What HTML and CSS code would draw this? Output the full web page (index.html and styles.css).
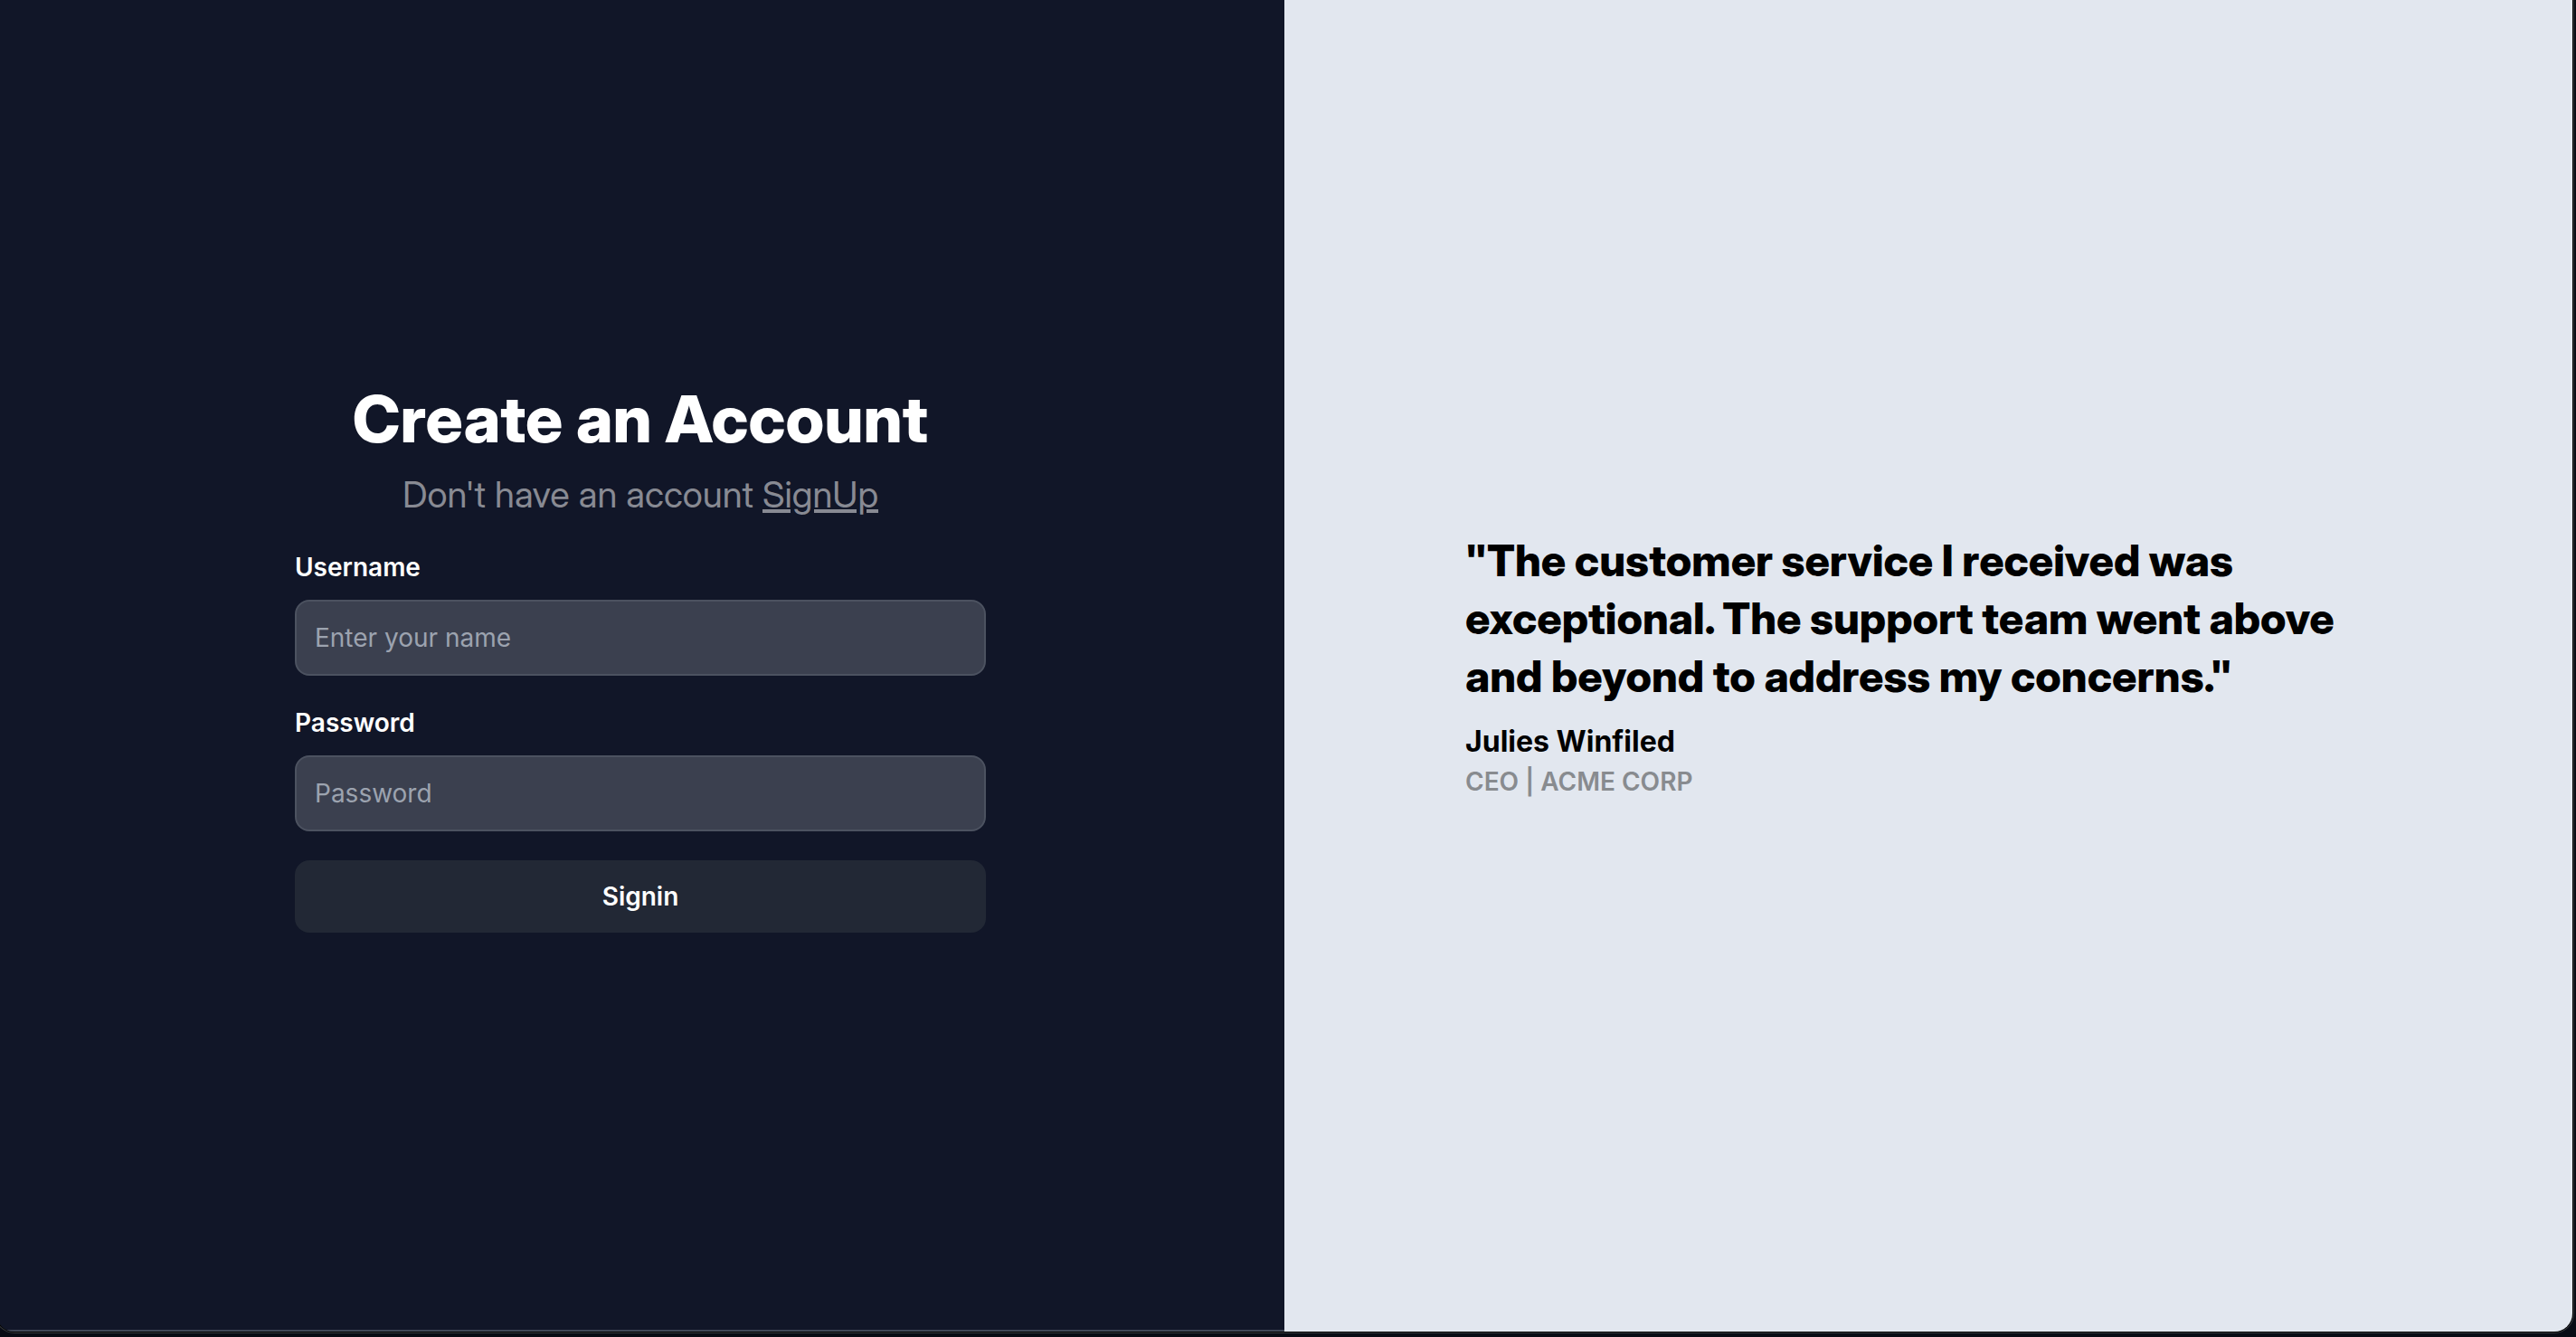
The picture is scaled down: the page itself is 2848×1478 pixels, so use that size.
FILE: index.html
```
<!DOCTYPE html>
<html lang="en">
<head>
<meta charset="utf-8">
<title>Create an Account</title>
<link rel="stylesheet" href="styles.css">
</head>
<body>
<main class="window">
  <section class="account">
    <div class="account-inner">
      <h1 class="title">Create an Account</h1>
      <p class="subtitle">Don't have an account <a class="link" href="#signup">SignUp</a></p>
      <form class="form">
        <div class="field">
          <label class="label" for="username">Username</label>
          <input class="input" id="username" type="text" placeholder="Enter your name">
        </div>
        <div class="field">
          <label class="label" for="password">Password</label>
          <input class="input" id="password" type="password" placeholder="Password">
        </div>
        <button class="submit" type="submit">Signin</button>
      </form>
    </div>
  </section>
  <section class="testimonial">
    <figure class="quote">
      <blockquote class="quote-text">"The customer service I received was exceptional. The support team went above and beyond to address my concerns."</blockquote>
      <figcaption>
        <p class="author">Julies Winfiled</p>
        <p class="role">CEO | ACME CORP</p>
      </figcaption>
    </figure>
  </section>
</main>
</body>
</html>
```
FILE: styles.css
```
* { box-sizing: border-box; margin: 0; }

body {
  display: flex;
  min-height: 100vh;
  padding-bottom: 6px;
  background: #080b14;
  font-family: Inter, "Liberation Sans", sans-serif;
  overflow-x: hidden;
}

.window {
  flex: 1;
  display: grid;
  grid-template-columns: 1fr 1fr;
  margin: 0 4px 0 -4px;
  border-radius: 0 0 20px 20px;
  overflow: hidden;
  box-shadow: 0 0 0 1px #000, 0 0 0 2px #35383c;
}

.account {
  display: grid;
  place-items: center;
  padding-bottom: 16px;
  background: #111628;
  border-bottom: 2px solid #414858;
}

.account-inner {
  width: 764px;
  max-width: 100%;
}

.title,
.subtitle,
.quote-text {
  font-family: "Inter Display", Inter, "Liberation Sans", sans-serif;
  font-variation-settings: "opsz" 32;
}

.title {
  font-size: 72px;
  line-height: 80px;
  font-weight: 800;
  color: #fff;
  text-align: center;
}

.subtitle {
  margin-top: 16px;
  font-size: 40px;
  line-height: 56px;
  color: #888a93;
  text-align: center;
}

.link { color: inherit; text-decoration: underline; }

.form {
  display: grid;
  gap: 32px;
  margin-top: 32px;
}

.field { display: grid; gap: 16px; }

.label {
  font-size: 28px;
  line-height: 40px;
  font-weight: 600;
  color: #fff;
}

.input {
  width: 100%;
  height: 84px;
  padding: 0 20px;
  border: 2px solid #4c5260;
  border-radius: 16px;
  background: #3b404f;
  color: #fff;
  font: 28px/40px Inter, "Liberation Sans", sans-serif;
}

.input::placeholder { color: #9ca3af; opacity: 1; }

.submit {
  height: 80px;
  border: 0;
  border-radius: 16px;
  background: #222835;
  color: #fff;
  font: 600 28px/40px Inter, "Liberation Sans", sans-serif;
}

.testimonial {
  display: grid;
  align-items: center;
  padding: 0 200px;
  background: #e2e7ef;
}

.quote-text {
  font-size: 48px;
  line-height: 64px;
  font-weight: 800;
  color: #000;
}

.author {
  margin-top: 16px;
  font-size: 32px;
  line-height: 48px;
  font-weight: 700;
  color: #000;
}

.role {
  font-size: 28px;
  line-height: 40px;
  font-weight: 600;
  color: #888b8f;
}
```
